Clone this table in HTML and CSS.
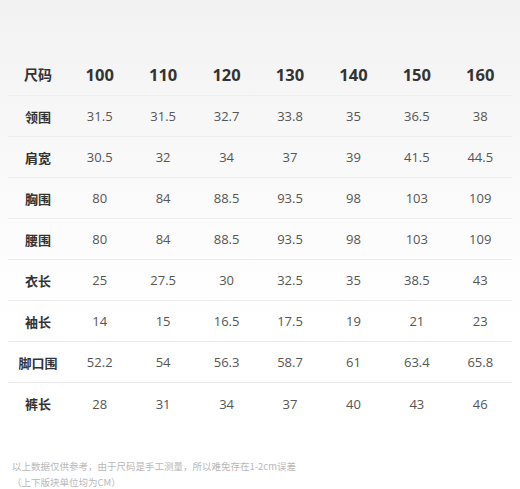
FILE: index.html
```html
<!DOCTYPE html>
<html lang="zh">
<head>
<meta charset="utf-8">
<link rel="stylesheet" href="styles.css">
</head>
<body>
<div class="page">
  <div class="table">
    <div class="row head">
      <div class="label">尺码</div><div>100</div><div>110</div><div>120</div><div>130</div><div>140</div><div>150</div><div>160</div>
    </div>
    <div class="row"><div class="label">领围</div><div>31.5</div><div>31.5</div><div>32.7</div><div>33.8</div><div>35</div><div>36.5</div><div>38</div></div>
    <div class="row"><div class="label">肩宽</div><div>30.5</div><div>32</div><div>34</div><div>37</div><div>39</div><div>41.5</div><div>44.5</div></div>
    <div class="row"><div class="label">胸围</div><div>80</div><div>84</div><div>88.5</div><div>93.5</div><div>98</div><div>103</div><div>109</div></div>
    <div class="row"><div class="label">腰围</div><div>80</div><div>84</div><div>88.5</div><div>93.5</div><div>98</div><div>103</div><div>109</div></div>
    <div class="row"><div class="label">衣长</div><div>25</div><div>27.5</div><div>30</div><div>32.5</div><div>35</div><div>38.5</div><div>43</div></div>
    <div class="row"><div class="label">袖长</div><div>14</div><div>15</div><div>16.5</div><div>17.5</div><div>19</div><div>21</div><div>23</div></div>
    <div class="row"><div class="label">脚口围</div><div>52.2</div><div>54</div><div>56.3</div><div>58.7</div><div>61</div><div>63.4</div><div>65.8</div></div>
    <div class="row last"><div class="label">裤长</div><div>28</div><div>31</div><div>34</div><div>37</div><div>40</div><div>43</div><div>46</div></div>
  </div>
  <div class="note">
    <p>以上数据仅供参考，由于尺码是手工测量，所以难免存在1-2cm误差</p>
    <p>（上下版块单位均为CM）</p>
  </div>
</div>
</body>
</html>
```
FILE: styles.css
```css
html, body {
  margin: 0;
  padding: 0;
  background: #fff;
}
body {
  font-family: "Open Sans", "Noto Sans CJK SC", sans-serif;
  color: #444;
}
.page {
  width: 520px;
  height: 489px;
  box-sizing: border-box;
  padding-top: 53px;
  overflow: hidden;
  background: linear-gradient(to bottom, #f2f2f2 0px, #f7f7f7 120px, #fdfdfd 260px, #ffffff 330px);
}
.table {
  margin: 0 8px;
}
.row {
  display: grid;
  grid-template-columns: 60px repeat(7, 1fr);
  height: 41px;
  align-items: center;
  text-align: center;
  border-bottom: 1px solid #ececec;
  box-sizing: border-box;
  font-size: 13px;
  color: #555;
}
.row.head {
  height: 43px;
  font-size: 16.5px;
  font-weight: 700;
  color: #333;
}
.row.last {
  border-bottom: none;
}
.row .label {
  font-family: "Noto Sans CJK SC", sans-serif;
  font-weight: 700;
  font-size: 13px;
  color: #333;
}
.row.head .label {
  font-size: 14px;
}
.note {
  margin: 34px 0 0 12px;
  font-family: "Noto Sans CJK SC", sans-serif;
  font-size: 9.5px;
  color: #b8b8b8;
  line-height: 16px;
}
.note p {
  margin: 0;
}
```
